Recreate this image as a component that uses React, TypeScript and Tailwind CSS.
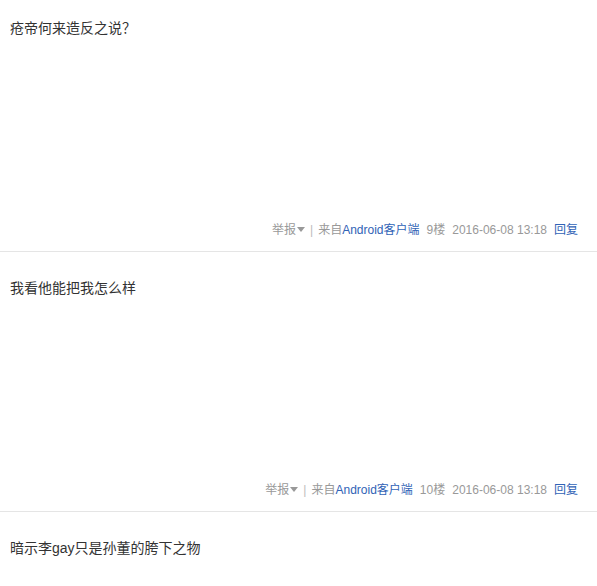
import React from 'react';

type Post = { id: number; text: string; floor: number; time: string; last?: boolean };

const posts: Post[] = [
  { id: 1, text: '疮帝何来造反之说？', floor: 9, time: '2016-06-08 13:18' },
  { id: 2, text: '我看他能把我怎么样', floor: 10, time: '2016-06-08 13:18' },
  { id: 3, text: '暗示李gay只是孙董的胯下之物', floor: 11, time: '2016-06-08 13:19', last: true },
];

function Meta({ floor, time }: { floor: number; time: string }) {
  return (
    <div className="flex items-center justify-end pt-[1px] pr-[19px] text-[12px] leading-[18px] text-[#999]">
      <span className="flex items-center">
        举报
        <svg width="8" height="5" viewBox="0 0 8 5" className="ml-[1px] -mt-[2px]">
          <path d="M0 0 H8 L4 5 Z" fill="#999" />
        </svg>
      </span>
      <span className="mx-[5px] text-[#bbb]">|</span>
      <span>
        来自<span className="text-[#3163b6]">Android客户端</span>
      </span>
      <span className="ml-[7px]">{floor}楼</span>
      <span className="ml-[7px]">{time}</span>
      <span className="ml-[7px] text-[#3163b6]">回复</span>
    </div>
  );
}

export default function App() {
  return (
    <div
      className="w-[597px] h-[586px] overflow-hidden bg-white"
      style={{ fontFamily: '"Liberation Sans", Arial, "Noto Sans CJK SC", sans-serif' }}
    >
      <div className="-mt-[8px]">
        {posts.map(p => (
          <div key={p.id} className="h-[260px] border-b border-[#e5e5e5] flex flex-col">
            <div className="pt-[26px] pl-[10px] h-[228px] text-[14px] leading-[20px] text-[#333]">{p.text}</div>
            {!p.last && <Meta floor={p.floor} time={p.time} />}
          </div>
        ))}
      </div>
    </div>
  );
}
